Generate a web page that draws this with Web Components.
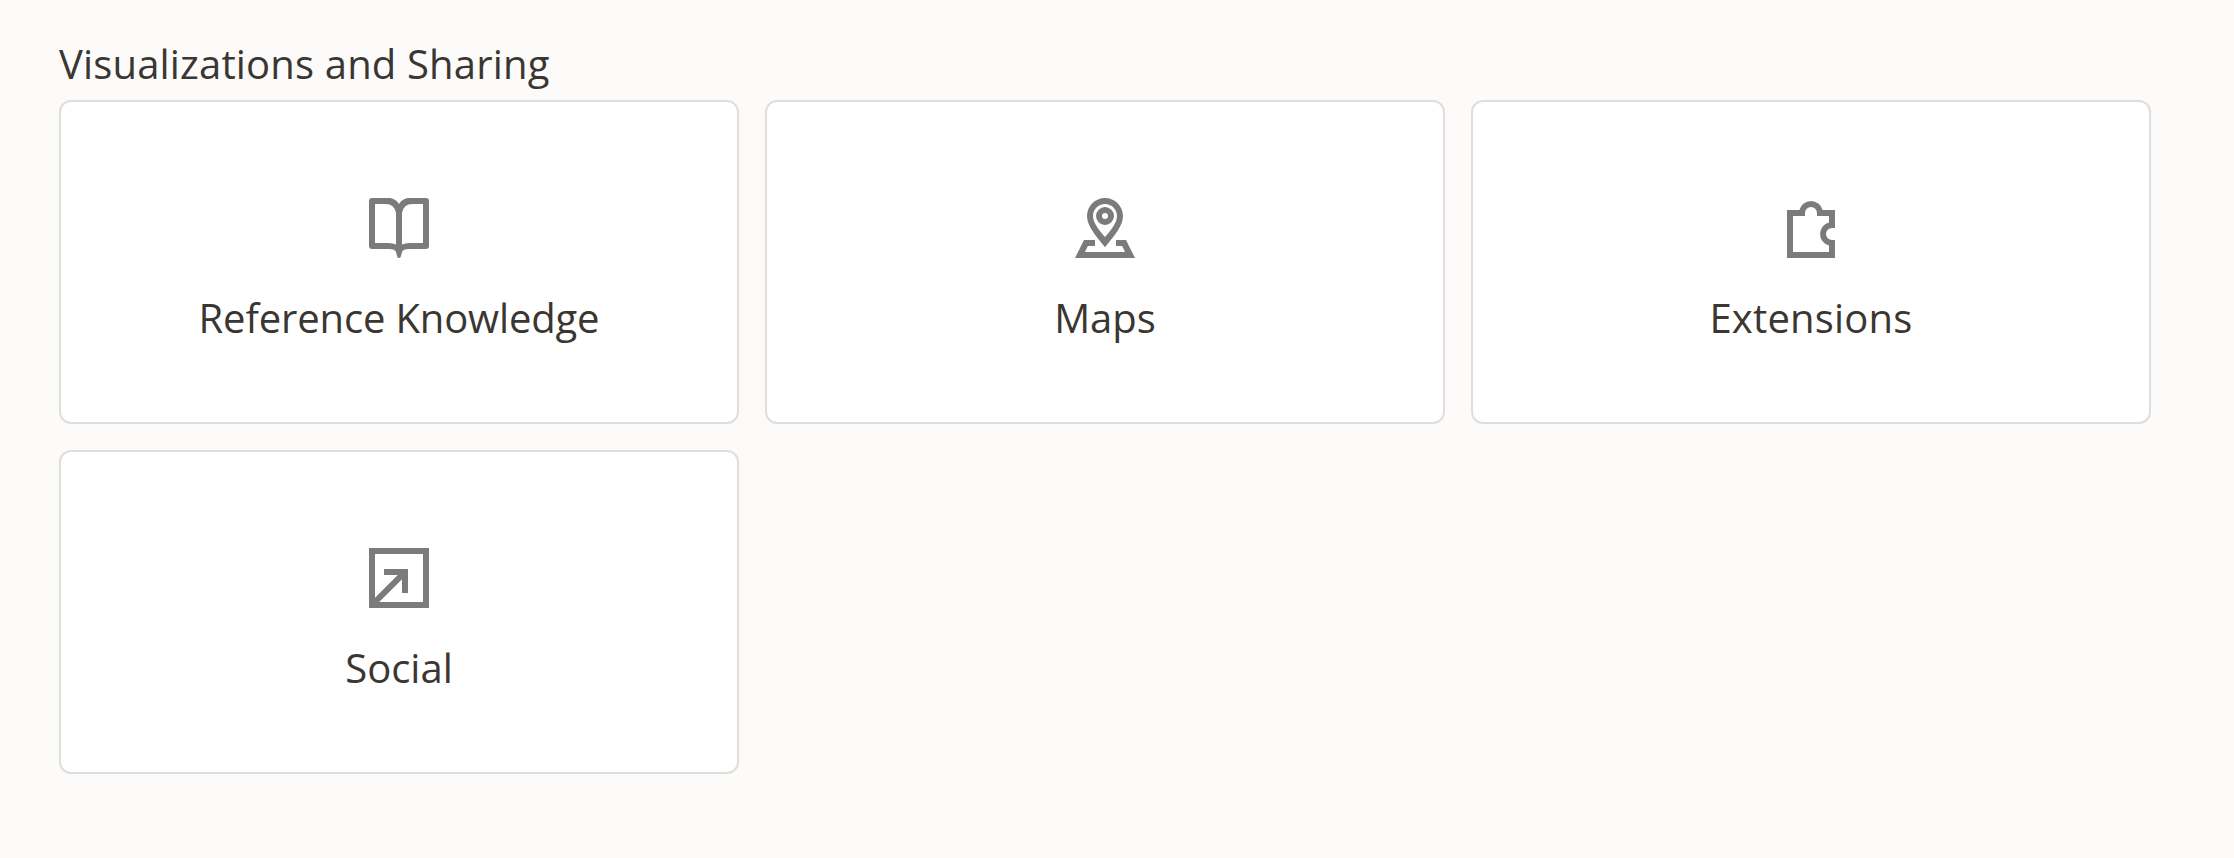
<!DOCTYPE html>
<html lang="en">
<head>
<meta charset="utf-8">
<title>Visualizations and Sharing</title>
<style>
html, body { margin: 0; }
body { background: #fcfbfa; color: #3a3631; font-family: "Open Sans", "Noto Sans", sans-serif; font-size: 40px; line-height: 55px; }
</style>
</head>
<body>
<tile-section>
  <span slot="heading">Visualizations and Sharing</span>
  <nav-tile icon="book" style="--tracking:-.15px">Reference Knowledge</nav-tile>
  <nav-tile icon="map">Maps</nav-tile>
  <nav-tile icon="puzzle" style="--tracking:.2px">Extensions</nav-tile>
  <nav-tile icon="share">Social</nav-tile>
</tile-section>
<script>
const ICONS = {
  book: '<path fill-rule="evenodd" d="M3 2H8.600C10 2 11.300 2.800 12 4C12.700 2.800 14 2 15.400 2H21A1 1 0 0 1 22 3V18A1 1 0 0 1 21 19H15.500C14 19 13.200 19.300 13 20L12.600 21.500Q12.400 22 12 22Q11.600 22 11.400 21.500L11 20C10.800 19.300 10 19 8.500 19H3A1 1 0 0 1 2 18V3A1 1 0 0 1 3 2ZM4 4V17H8.500Q10 17 11 17.500V7Q10.500 4 7.500 4ZM20 4H16.500Q13.500 4 13 7V17.500Q14 17 15.500 17H20Z"/>',
  map: '<path fill-rule="evenodd" d="M12 2C8.700 2 6 4.700 6 8C6 11 8.500 14.200 12 18.400C15.500 14.200 18 11 18 8C18 4.700 15.300 2 12 2ZM12 4C14.200 4 16 5.800 16 8C16 10 14.500 12.200 12 15C9.500 12.200 8 10 8 8C8 5.800 9.800 4 12 4ZM12 5A3 3 0 1 0 12 11A3 3 0 1 0 12 5ZM12 7A1 1 0 1 1 12 9A1 1 0 1 1 12 7Z"/><path d="M5 16H8.670V18H6.300L5.300 20H18.700L17.700 18H15.670V16H19L22 22H2Z"/>',
  puzzle: '<path fill-rule="evenodd" d="M4 6H8.130A4 4 0 0 1 15.870 6H20V12H19A2 2 0 0 0 19 16H20V22H4ZM6 8V20H18V17.870A4 4 0 0 1 18 10.130V8H14V7A2 2 0 0 0 10 7V8Z"/>',
  share: '<path fill-rule="evenodd" d="M2 2H22V22H2ZM4 4V18.600L11.600 11H7V9H15V17H13V12.400L5.400 20H20V4Z"/>'
};

class TileIcon extends HTMLElement {
  connectedCallback() {
    this.attachShadow({ mode: 'open' }).innerHTML =
      `<style>:host{display:block;width:72px;height:72px}svg{display:block;width:100%;height:100%;fill:#7b7b7b}</style>
       <svg viewBox="0 0 24 24" aria-hidden="true">${ICONS[this.getAttribute('name')]}</svg>`;
  }
}

class NavTile extends HTMLElement {
  connectedCallback() {
    this.attachShadow({ mode: 'open' }).innerHTML =
      `<style>
        :host{box-sizing:border-box;display:flex;flex-direction:column;align-items:center;height:324px;padding-top:90px;background:#fff;border:2px solid #dfdedc;border-radius:12px}
        .label{margin-top:26px;white-space:nowrap;letter-spacing:var(--tracking,0)}
       </style>
       <tile-icon name="${this.getAttribute('icon')}"></tile-icon>
       <div class="label"><slot></slot></div>`;
  }
}

class TileSection extends HTMLElement {
  connectedCallback() {
    this.attachShadow({ mode: 'open' }).innerHTML =
      `<style>
        :host{display:block;padding:36px 83px 0 59px}
        h2{margin:0 0 9px;font:inherit;white-space:nowrap;letter-spacing:.16px}
        .grid{display:grid;grid-template-columns:repeat(3,1fr);gap:26px}
       </style>
       <h2><slot name="heading"></slot></h2>
       <div class="grid"><slot></slot></div>`;
  }
}
customElements.define('tile-icon', TileIcon);
customElements.define('nav-tile', NavTile);
customElements.define('tile-section', TileSection);
</script>
</body>
</html>
